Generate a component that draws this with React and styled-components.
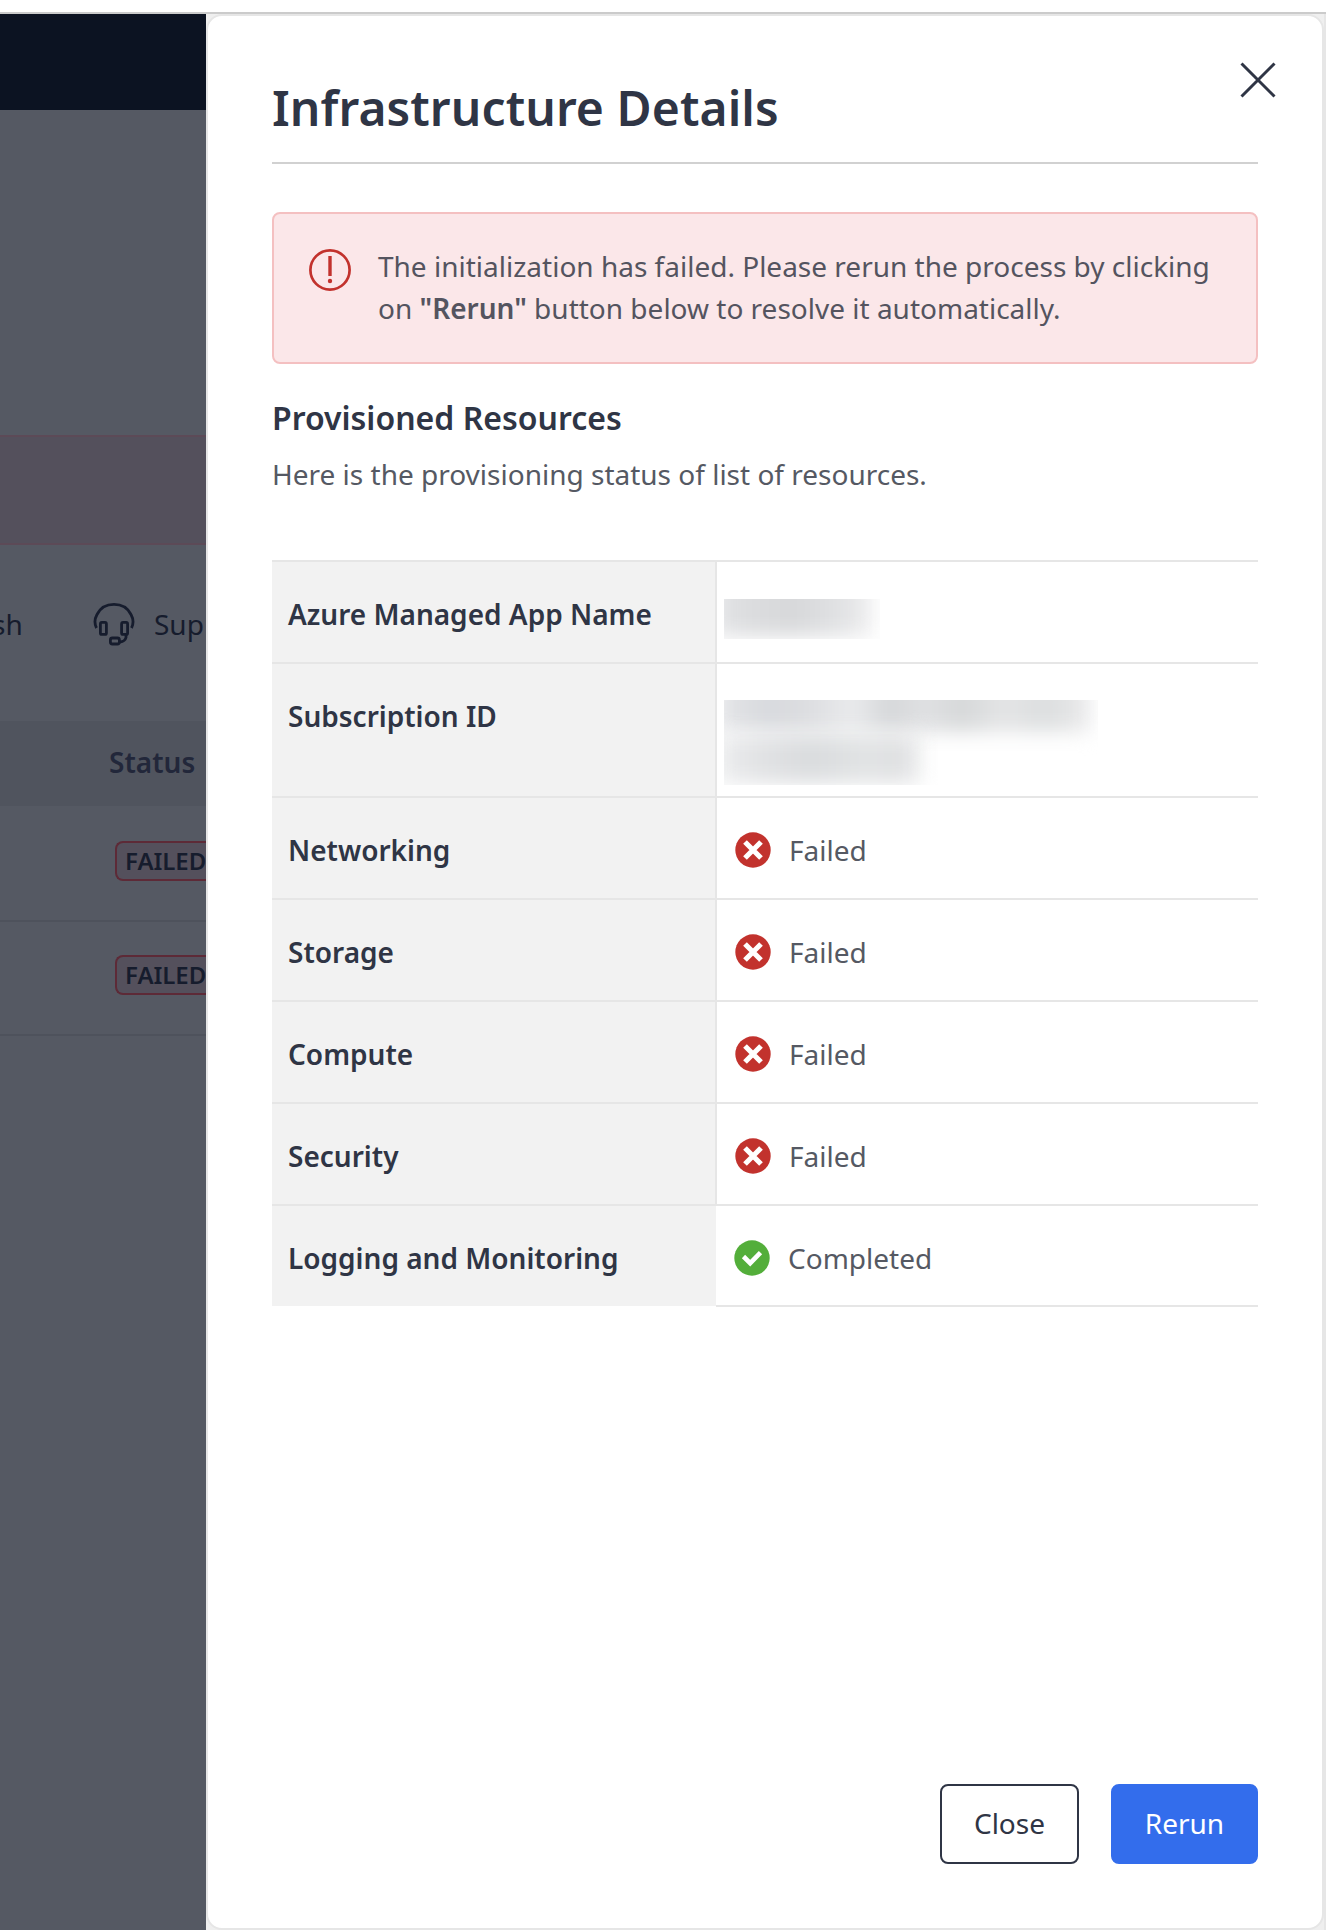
import React from "react";
import styled, { createGlobalStyle } from "styled-components";

const Global = createGlobalStyle`
  * { box-sizing: border-box; }
  body { margin: 0; background: #fff; font-family: "Noto Sans", sans-serif; font-size: 28px; line-height: 42px; color: #555963; }
  h1, h2, p { margin: 0; }
`;

const Screen = styled.div`
  height: 1930px;
  padding-top: 12px;
  display: flex;
  flex-direction: column;
  overflow: hidden;
`;
const Viewport = styled.div`
  flex: 1;
  display: grid;
  grid-template-columns: 206px 1118px 2px;
  border-top: 2px solid #cbcbcb;
  background: #efefef;
  min-height: 0;
`;
const Backdrop = styled.div`
  background: #555963;
  color: #161c2d;
  overflow: hidden;
  white-space: nowrap;
`;
const TopBar = styled.div`
  height: 96px;
  background: #0c1322;
`;
const DimAlert = styled.div`
  height: 110px;
  margin-top: 325px;
  background: #54505c;
  border: solid #5c4a57;
  border-width: 2px 0;
`;
const Toolbar = styled.div`
  height: 176px;
  display: flex;
  align-items: center;
  padding-bottom: 18px;
  svg { flex: none; }
`;
const RefreshText = styled.span`
  flex: none;
  width: 94px;
  margin: 0 7px 0 -8px;
`;
const SupportText = styled.span`
  margin-left: 19px;
`;
const DimHead = styled.div`
  height: 85px;
  background: #50545e;
  color: #22273a;
  font-weight: 600;
  padding: 20px 0 0 109px;
`;
const DimRow = styled.div`
  height: ${(p) => p.$height}px;
  border-bottom: 2px solid #4e525c;
  display: flex;
  align-items: flex-end;
  padding: 0 0 39px 115px;
`;
const Badge = styled.span`
  flex: 1;
  height: 40px;
  border: 2px solid #5d2a37;
  border-right: 0;
  border-radius: 8px 0 0 8px;
  background: #54505c;
  font-size: 24px;
  line-height: 36px;
  font-weight: 600;
  padding-left: 8px;
  letter-spacing: -0.05px;
`;

const Drawer = styled.section`
  background: #fff;
  border: 2px solid #e6e6e6;
  border-radius: 16px;
  padding: 0 64px;
  display: flex;
  flex-direction: column;
`;
const Edge = styled.div`
  background: #e6e6e6;
`;
const Header = styled.header`
  height: 148px;
  flex: none;
  border-bottom: 2px solid #d1d1d1;
  display: flex;
  justify-content: space-between;
  align-items: flex-start;
`;
const Title = styled.h1`
  font-size: 48px;
  font-weight: 600;
  line-height: 64px;
  letter-spacing: 0.08px;
  color: #2f3545;
  padding-top: 60px;
  white-space: nowrap;
`;
const CloseIcon = styled.button`
  border: 0;
  background: none;
  padding: 0;
  width: 36px;
  height: 36px;
  margin: 46px -18px 0 0;
  svg { display: block; }
`;
const Alert = styled.div`
  margin-top: 48px;
  height: 152px;
  flex: none;
  border: 2px solid #f4c0c1;
  border-radius: 8px;
  background: #fbe7e9;
  padding: 31px 33px 0 35px;
  display: flex;
  gap: 27px;
  svg { flex: none; margin-top: 4px; }
  p { white-space: nowrap; color: #54545f; }
  b { font-weight: 600; }
`;
const Subtitle = styled.h2`
  font-size: 32px;
  line-height: 48px;
  font-weight: 600;
  color: #2f3545;
  margin-top: 30px;
`;
const Lead = styled.p`
  margin-top: 11px;
`;
const Table = styled.div`
  margin-top: 65px;
`;
const Row = styled.div`
  height: ${(p) => p.$height}px;
  display: grid;
  grid-template-columns: 445px 1fr;
  border-top: 2px solid #e6e6e6;
`;
const Label = styled.div`
  background: #f2f2f2;
  border-right: ${(p) => (p.$last ? 0 : 2)}px solid #e6e6e6;
  margin-right: ${(p) => (p.$last ? 1 : 0)}px;
  padding: 31px 0 0 16px;
  font-weight: 600;
  color: #2f3545;
  white-space: nowrap;
`;
const Value = styled.div`
  display: flex;
  align-items: flex-start;
  gap: 18px;
  padding-top: 31px;
  padding-left: 18px;
  svg { flex: none; margin-top: 3px; }
`;
const LastValue = styled(Value)`
  margin-left: -1px;
  margin-bottom: -1px;
  border-bottom: 2px solid #e6e6e6;
`;
const Redacted = styled.div`
  overflow: hidden;
  width: ${(p) => p.$w}px;
  height: ${(p) => p.$h}px;
  margin: ${(p) => p.$top}px 0 0 -11px;
  display: flex;
  flex-direction: column;
  gap: 2px;
`;
const Smudge = styled.div`
  flex: none;
  width: ${(p) => p.$w}px;
  height: ${(p) => p.$h}px;
  margin-left: ${(p) => p.$left || 0}px;
  margin-top: ${(p) => p.$top || 0}px;
  background: linear-gradient(90deg, ${(p) => p.$tones});
  filter: blur(10px);
`;
const Footer = styled.footer`
  margin-top: auto;
  padding-bottom: 64px;
  display: flex;
  justify-content: flex-end;
  gap: 32px;
`;
const Button = styled.button`
  width: ${(p) => p.$width}px;
  height: 80px;
  padding: 0 0 2px;
  border-radius: 8px;
  font: inherit;
  border: 2px solid ${(p) => (p.$primary ? "#336dec" : "#2f3545")};
  background: ${(p) => (p.$primary ? "#336dec" : "#fff")};
  color: ${(p) => (p.$primary ? "#fff" : "#2f3545")};
`;

const Headset = () => (
  <svg width="42" height="44" viewBox="0 0 42 44" fill="none" stroke="#161c2d" strokeWidth="2.8" strokeLinejoin="round">
    <path d="M3.500 26C1.500 22 1.500 17 4 12.500C7.500 5.500 14 2.400 21 2.400S34.500 5.500 38 12.500C40.500 17 40.500 22 38.500 26" />
    <rect x="7.400" y="20.400" width="6" height="12" rx="1.500" />
    <rect x="28.600" y="20.400" width="6" height="12" rx="1.500" />
    <path d="M33 33v2.500q-1 4-6 4.500" />
    <rect x="17.400" y="36" width="9" height="6" rx="2" />
  </svg>
);
const Cross = () => (
  <svg width="36" height="36" viewBox="0 0 36 36" stroke="#2f3545" strokeWidth="3">
    <path d="M1.500 1.500l33 33M34.500 1.500l-33 33" />
  </svg>
);
const Warning = () => (
  <svg width="42" height="42" viewBox="0 0 42 42" fill="none" stroke="#c2322d">
    <circle cx="21" cy="21" r="19.600" strokeWidth="2.700" />
    <path d="M21 7v20" strokeWidth="3.400" />
    <circle cx="21" cy="32" r="2.200" fill="#c2322d" stroke="none" />
  </svg>
);
const FailIcon = () => (
  <svg width="36" height="36" viewBox="0 0 36 36">
    <circle cx="18" cy="18" r="17.700" fill="#c2322d" />
    <path d="M10 10l16 16M26 10L10 26" stroke="#fff" strokeWidth="5.200" />
  </svg>
);
const OkIcon = () => (
  <svg width="36" height="36" viewBox="0 0 36 36">
    <circle cx="18" cy="18" r="17.700" fill="#53ae3a" />
    <path d="M9.500 16.500l6.700 6.700L26.500 12.700" fill="none" stroke="#fff" strokeWidth="4.600" />
  </svg>
);

const failures = ["Networking", "Storage", "Compute", "Security"];

export default function App() {
  return (
    <Screen>
      <Global />
      <Viewport>
        <Backdrop>
          <TopBar />
          <DimAlert />
          <Toolbar>
            <RefreshText>sh</RefreshText>
            <Headset />
            <SupportText>Sup</SupportText>
          </Toolbar>
          <DimHead>Status</DimHead>
          <DimRow $height={116}><Badge>FAILED</Badge></DimRow>
          <DimRow $height={114}><Badge>FAILED</Badge></DimRow>
        </Backdrop>
        <Drawer>
          <Header>
            <Title>Infrastructure Details</Title>
            <CloseIcon aria-label="Close"><Cross /></CloseIcon>
          </Header>
          <Alert>
            <Warning />
            <p>
              The initialization has failed. Please rerun the process by clicking<br />
              on <b>"Rerun"</b> button below to resolve it automatically.
            </p>
          </Alert>
          <Subtitle>Provisioned Resources</Subtitle>
          <Lead>Here is the provisioning status of list of resources.</Lead>
          <Table>
            <Row $height={102}>
              <Label>Azure Managed App Name</Label>
              <Value>
                <Redacted $w={156} $h={40} $top={6}>
                  <Smudge $w={158} $h={57} $top={-20} $left={-10} $tones="#e4e5e7, #dcdddf 20%, #d7d8da 50%, #e0e1e3 78%, #eeeeef" />
                </Redacted>
              </Value>
            </Row>
            <Row $height={134}>
              <Label>Subscription ID</Label>
              <Value>
                <Redacted $w={374} $h={85} $top={5}>
                  <Smudge $w={374} $h={52} $top={-20} $left={-8} $tones="#e6e7e9, #d8dade 13%, #dcdde0 24%, #eaebed 37%, #d5d7d9 46%, #e0e1e3 56%, #d6d8d9 66%, #e4e5e6 77%, #dcdedf 88%, #eaeaeb" />
                  <Smudge $w={204} $h={49} $left={-8} $tones="#eeeff0, #e2e3e5 20%, #dadcde 46%, #e2e4e5 75%, #dfe0e2 88%, #e8e9ea" />
                </Redacted>
              </Value>
            </Row>
            {failures.map((name) => (
              <Row key={name} $height={102}>
                <Label>{name}</Label>
                <Value><FailIcon />Failed</Value>
              </Row>
            ))}
            <Row $height={102}>
              <Label $last>Logging and Monitoring</Label>
              <LastValue><OkIcon />Completed</LastValue>
            </Row>
          </Table>
          <Footer>
            <Button $width={139}>Close</Button>
            <Button $width={147} $primary>Rerun</Button>
          </Footer>
        </Drawer>
        <Edge />
      </Viewport>
    </Screen>
  );
}
